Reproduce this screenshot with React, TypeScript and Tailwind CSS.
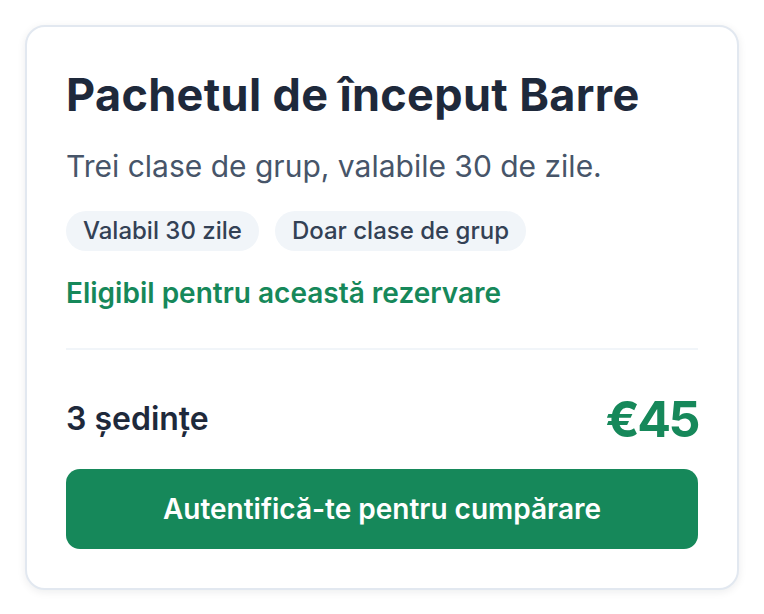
import React from "react";

const App: React.FC = () => {
  return (
    <div className="min-h-screen bg-white p-[25px] font-['Inter',sans-serif]">
      <div className="w-[714px] rounded-[20px] border-2 border-[#e2e8f0] bg-white px-[39px] pt-[41px] pb-[39px] shadow-[0_2px_8px_rgba(15,23,42,0.08)]">
        <h2 className="text-[45px] leading-[54px] font-bold tracking-[0.35px] text-[#1e293b]">
          Pachetul de început Barre
        </h2>
        <p className="mt-[24px] text-[30px] leading-[40px] text-[#475569]">
          Trei clase de grup, valabile 30 de zile.
        </p>

        <div className="mt-[25px] flex gap-4">
          <span className="flex h-[40px] items-center rounded-full bg-[#f1f5f9] px-[17px] text-[24px] font-medium text-[#334155]">
            Valabil 30 zile
          </span>
          <span className="flex h-[40px] items-center rounded-full bg-[#f1f5f9] px-[17px] text-[24px] font-medium text-[#334155]">
            Doar clase de grup
          </span>
        </div>

        <p className="mt-[24px] text-[28px] leading-[36px] font-semibold text-[#16885a]">
          Eligibil pentru această rezervare
        </p>

        <div className="mt-[37px] h-[2px] bg-[#f1f5f9]" />

        <div className="mt-[41px] flex h-[56px] items-center justify-between">
          <span className="text-[32px] leading-[40px] font-semibold text-[#1e293b]">3 ședințe</span>
          <span className="text-[50px] leading-[56px] font-bold tracking-[-2.5px] text-[#16885a]">€45</span>
        </div>

        <button
          type="button"
          className="mt-[22px] h-[80px] w-full rounded-[14px] bg-[#16885a] text-[28px] font-semibold text-white"
        >
          Autentifică-te pentru cumpărare
        </button>
      </div>
    </div>
  );
};

export default App;
